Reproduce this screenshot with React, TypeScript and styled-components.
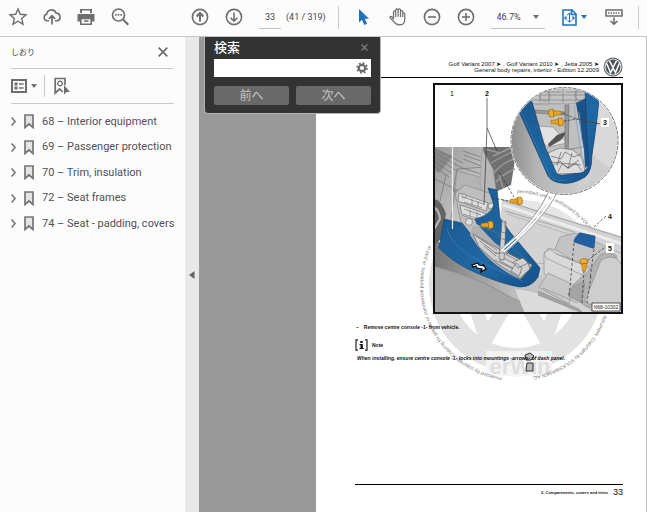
import React, { useState } from "react";
import styled, { createGlobalStyle } from "styled-components";

const GlobalStyle = createGlobalStyle`
  * { box-sizing: border-box; }
  body { margin: 0; background: #fcfcfc; overflow: hidden; }
  button, input, select { font: inherit; color: inherit; margin: 0; padding: 0; border: 0; background: none; }
  button { cursor: pointer; display: inline-flex; align-items: center; justify-content: center; }
  svg { display: block; flex: none; }
`;

const Shell = styled.div`
  display: flex;
  flex-direction: column;
  height: 100vh;
  font-family: "Open Sans", "Noto Sans CJK JP", sans-serif;
  font-size: 11px;
  color: #444;
`;

const Toolbar = styled.header`
  display: flex;
  align-items: center;
  flex: none;
  height: 37px;
  padding: 0 9px 2px 8px;
  background: #fcfcfc;
  border-bottom: 1px solid #c6c6c6;
`;

const Group = styled.div<{ $gap: number; $before?: number }>`
  display: flex;
  align-items: center;
  gap: ${(p) => p.$gap}px;
  margin-left: ${(p) => p.$before ?? 0}px;
`;

const IconButton = styled.button<{ $color?: string; $width?: number }>`
  height: 20px;
  min-width: ${(p) => p.$width ?? 20}px;
  gap: 4px;
  color: ${(p) => p.$color ?? "#6e6e6e"};
`;

const Divider = styled.span<{ $height: number; $before?: number }>`
  width: 1px;
  height: ${(p) => p.$height}px;
  margin-left: ${(p) => p.$before ?? 0}px;
  background: #c9c9c9;
`;

const PageInput = styled.input`
  width: 22px;
  height: 23px;
  font-family: Roboto, sans-serif;
  font-size: 9px;
  text-align: center;
  border-bottom: 1px solid #c4c4c4;
  outline: none;
`;

const PageCount = styled.span`
  width: 38px;
  font-family: Roboto, sans-serif;
  font-size: 9px;
  white-space: nowrap;
`;

const ZoomBox = styled.label`
  display: flex;
  align-items: center;
  width: 54px;
  height: 23px;
  padding-right: 6px;
  border-bottom: 1px solid #c4c4c4;
  color: #6e6e6e;
`;

const ZoomSelect = styled.select`
  appearance: none;
  flex: 1;
  min-width: 0;
  padding-left: 6px;
  font-family: Roboto, sans-serif;
  font-size: 9px;
  color: #444;
  outline: none;
`;

const Workspace = styled.div`
  display: flex;
  flex: 1;
  min-height: 0;
`;

const Sidebar = styled.aside`
  flex: none;
  width: 185px;
  padding: 0 11px;
  background: #fcfcfc;
`;

const PanelHeader = styled.div`
  display: flex;
  align-items: center;
  justify-content: space-between;
  height: 32px;
  padding: 0 1px 2px 0;
  border-bottom: 1px solid #c9c9c9;
`;

const PanelTitle = styled.h2`
  margin: 0;
  font-size: 8px;
  font-weight: 400;
`;

const PanelTools = styled.div`
  display: flex;
  align-items: center;
  height: 35px;
  border-bottom: 1px solid #c9c9c9;
`;

const BookmarkList = styled.ul`
  list-style: none;
  margin: 0;
  padding: 5px 0 0;
`;

const BookmarkRow = styled.li`
  display: flex;
  align-items: center;
  height: 25px;
  &:nth-child(even) { height: 26px; }
`;

const Expander = styled.button`
  width: 5px;
  height: 12px;
  color: #6e6e6e;
`;

const BookmarkLink = styled.a`
  display: flex;
  align-items: center;
  gap: 8px;
  margin-left: 8px;
  font-family: Roboto, sans-serif;
  font-size: 11px;
  line-height: 14px;
  white-space: nowrap;
  color: #505058;
  text-decoration: none;
`;

const Splitter = styled.button`
  && {
    flex: none;
    width: 14px;
    background: #e9e9e9;
    color: #666;
  }
`;

const Canvas = styled.main`
  position: relative;
  display: flex;
  flex: 1;
  min-width: 0;
  padding-left: 117px;
  background: #999;
`;

const Sheet = styled.article`
  position: relative;
  display: flex;
  flex-direction: column;
  flex: 1;
  min-width: 0;
  padding: 19px 23px 15px 39px;
  background: #fff;
  border-right: 1px solid #bbb;
  font-family: "Liberation Sans", Arial, sans-serif;
  color: #111;
`;

const SheetHeader = styled.div`
  display: flex;
  justify-content: flex-end;
  align-items: center;
  height: 22px;
  border-bottom: 1px solid #000;
`;

const HeaderMark = styled.div`
  display: flex;
  align-items: center;
  gap: 4px;
  height: 21px;
`;

const HeaderText = styled.p`
  margin: 0;
  font-size: 6px;
  line-height: 6px;
  text-align: right;
  white-space: nowrap;
  color: #111;
`;

const Figure = styled.figure`
  position: relative;
  align-self: flex-end;
  margin: 5px 0 0;
  border: 2px solid #111;
  background: #fff;
`;

const Watermark = styled.div`
  position: absolute;
  left: 96px;
  top: 144px;
  pointer-events: none;
`;

const Step = styled.p`
  position: relative;
  display: flex;
  gap: 5px;
  margin: 9px 0 0;
  padding-left: 1px;
  font-size: 5px;
  line-height: 8px;
  font-weight: 700;
`;

const NoteHead = styled.div`
  position: relative;
  display: flex;
  align-items: center;
  gap: 4px;
  margin-top: 8px;
  font-size: 5px;
  font-weight: 700;
`;

const NoteBody = styled.p`
  position: relative;
  margin: 3px 0 0 2px;
  font-size: 5px;
  line-height: 8px;
  font-style: italic;
  font-weight: 700;
  white-space: nowrap;
`;

const SheetFooter = styled.footer`
  display: flex;
  justify-content: flex-end;
  align-items: center;
  gap: 5px;
  margin-top: auto;
  padding-top: 2px;
  border-top: 1px solid #000;
  font-size: 4px;
  font-weight: 700;
`;

const PageNumber = styled.span`
  font-size: 9px;
  line-height: 10px;
  font-weight: 400;
`;

const FindPanel = styled.section`
  position: absolute;
  left: 5px;
  top: 0;
  width: 177px;
  padding: 0 9px 8px 9px;
  background: #333;
  border: solid #b4b4b4;
  border-width: 0 1px 1px;
  border-radius: 0 0 4px 4px;
  color: #fff;
`;

const FindHeader = styled.div`
  display: flex;
  align-items: center;
  justify-content: space-between;
  height: 22px;
  padding-bottom: 2px;
`;

const FindTitle = styled.h2`
  margin: 0;
  font-size: 13px;
  line-height: 16px;
  font-weight: 500;
`;

const FindField = styled.label`
  display: flex;
  align-items: center;
  height: 18px;
  padding-right: 3px;
  background: #fff;
  color: #6b6b6b;
`;

const FindInput = styled.input`
  flex: 1;
  min-width: 0;
  height: 18px;
  padding: 0 4px;
  outline: none;
`;

const FindActions = styled.div`
  display: grid;
  grid-template-columns: 1fr 1fr;
  gap: 7px;
  margin-top: 9px;
`;

const FindButton = styled.button`
  && {
    height: 19px;
    font-size: 12px;
    line-height: 16px;
    color: #c4c4c4;
    background: #696969;
    border-radius: 2px;
  }
`;

const Caret = () => (
  <svg width="6" height="4" viewBox="0 0 6 4"><path d="M0 0h6L3 4z" fill="currentColor" /></svg>
);

const Close = ({ size, width }: { size: number; width: number }) => (
  <svg width={size} height={size} viewBox="0 0 10 10" stroke="currentColor" strokeWidth={width}>
    <path d="M.7.7l8.6 8.6M9.3.7L.7 9.3" />
  </svg>
);

type Glyph = "star" | "cloud" | "print" | "search" | "up" | "down" | "hand" | "minus" | "plus";

const Icon = ({ name }: { name: Glyph }) => (
  <svg width="20" height="20" viewBox="0 0 20 20" fill="none" stroke="currentColor" strokeWidth="1.6">
    {name === "star" && <path d="M10 2l2.3 5.3 5.7.5-4.3 3.8 1.3 5.6-5-3-5 3 1.3-5.6L2 7.8l5.7-.5z" strokeWidth="1.4" />}
    {name === "cloud" && (
      <>
        <path d="M7 13.8H5.200a3.300 3.300 0 0 1-.5-6.500 4.800 4.800 0 0 1 9.300-1.200 3.900 3.900 0 0 1 1 7.700H13" />
        <path d="M10 17.500V9M6.900 11.800L10 8.700l3.100 3.100" strokeWidth="1.700" />
      </>
    )}
    {name === "print" && (
      <>
        <path d="M4 2h12v4H4z" fill="currentColor" stroke="none" />
        <path d="M6 3.500h8V7H6z" fill="#fcfcfc" stroke="none" />
        <path d="M1.500 7h17v7.500h-17z" fill="currentColor" stroke="none" />
        <path d="M4.800 11.500h10.400v5.700H4.800z" fill="#fcfcfc" />
        <path d="M8 14h4.500" />
      </>
    )}
    {name === "search" && (
      <>
        <circle cx="8.500" cy="8" r="6" strokeWidth="1.700" />
        <path d="M13 12.500l5.300 5.300" strokeWidth="2" />
        <path d="M5 7.800h7" strokeWidth="1.800" strokeDasharray="1.600 1.100" />
      </>
    )}
    {(name === "up" || name === "down" || name === "minus" || name === "plus") && <circle cx="10" cy="10" r="7.600" />}
    {name === "up" && <path d="M10 14.500V6.500M6.600 9.500L10 6l3.400 3.500" strokeWidth="2" />}
    {name === "down" && <path d="M10 5.500v8.500M6.600 10.800L10 14.200l3.400-3.400" />}
    {(name === "minus" || name === "plus") && <path d="M6 10h8" />}
    {name === "plus" && <path d="M10 6v8" />}
    {name === "hand" && (
      <path
        d="M5.500 12.500V5.200c0-1.800 2.200-1.800 2.200 0V10V3.200c0-1.900 2.400-1.900 2.400 0V9.700V3.200c0-1.900 2.400-1.700 2.400 0V10V4.800c0-1.700 2.300-1.700 2.300 0V10V7.200c0-1.600 2-1.500 2 0v5.200c0 3.500-2 5.500-5.500 5.500-3 0-4.200-1.200-5.500-3.200L2.200 11c-.8-1.300 1-2.200 2-.9l1.300 1.800"
        strokeWidth="1.200"
      />
    )}
  </svg>
);

const CursorIcon = () => (
  <svg width="11" height="18" viewBox="0 0 11 18"><path d="M1 1v13.500l3-2.800 2.200 5.300 2.800-1.200-2.200-5H11z" fill="currentColor" /></svg>
);

const FitIcon = () => (
  <svg width="15" height="17" viewBox="0 0 15 17" fill="none" stroke="currentColor" strokeWidth="1.600">
    <path d="M1 1h9l4 4v11H1zM9.500 1v4.500H14" />
    <path d="M7.500 4v9M5 6l2.500-2L9 5.500M5.500 11.500l2 1.500 2-1.500" strokeWidth="1" />
    <path d="M2 9l2.500-2.500v5zM13 9l-2.500-2.500v5z" fill="currentColor" stroke="none" />
  </svg>
);

const ScrollIcon = () => (
  <svg width="18" height="18" viewBox="0 0 18 18" fill="none" stroke="currentColor" strokeWidth="1.600">
    <path d="M1 2h16v6H1z" />
    <path d="M3 5h12" strokeWidth="1.700" strokeDasharray="1.500 1" />
    <path d="M9 9.500v6.500M5.500 13L9 16.200l3.500-3.200" />
  </svg>
);

const OptionsIcon = () => (
  <svg width="16" height="14" viewBox="0 0 16 14" fill="none" stroke="currentColor">
    <rect x="1" y="1" width="14" height="12" strokeWidth="2" />
    <path d="M3.500 5h3M3.500 9h3" strokeWidth="3" />
    <path d="M8 5h4.500M8 9h4.500" strokeWidth="1.500" />
  </svg>
);

const FindBookmarkIcon = () => (
  <svg width="16" height="18" viewBox="0 0 16 18" fill="none" stroke="currentColor" strokeWidth="1.700">
    <path d="M11 8V1.500H1.200V16l4.500-4 3 3" />
    <circle cx="6" cy="6.500" r="2.300" strokeWidth="1.300" />
    <path d="M10 8l6 7h-3.500L10 17.500z" fill="currentColor" stroke="none" />
  </svg>
);

const BookmarkIcon = () => (
  <svg width="10" height="15" viewBox="0 0 10 15"><path d="M1 1h8v12.500L5 10l-4 3.500z" fill="#e4e4e4" stroke="#757575" strokeWidth="1.700" /></svg>
);

const GearIcon = () => (
  <svg width="12" height="12" viewBox="0 0 12 12" fill="none" stroke="currentColor">
    <circle cx="6" cy="6" r="3.200" strokeWidth="2.200" />
    <circle cx="6" cy="6" r="4.900" strokeWidth="1.700" strokeDasharray="1.900 1.950" />
  </svg>
);

const VwLogo = () => (
  <svg width="20" height="20" viewBox="0 0 20 20">
    <circle cx="10" cy="10" r="9.500" fill="#555d64" />
    <circle cx="10" cy="10" r="8" fill="none" stroke="#e2e4e6" strokeWidth="1.200" />
    <circle cx="10" cy="10" r="7" fill="#4c545b" />
    <path d="M6.500 3.800l3 5.700h1l3-5.700M3.600 6.200l4 9.500L10 11l2.400 4.700 4-9.500" fill="none" stroke="#fff" strokeWidth="1.500" />
  </svg>
);

const WatermarkArt = () => (
  <svg width="208" height="204" viewBox="-104 -104 208 204">
    <defs>
      <path id="sealLeft" d="M-14 92A93 93 0 0 1-84-40" />
      <path id="sealRight" d="M88 30A93 93 0 0 1 14 92" />
    </defs>
    <g fill="none" stroke="#e2e2e2">
      <circle r="75" strokeWidth="24" />
      <path d="M-58-34L-30 54 0 2 30 54 58-34" strokeWidth="14" />
    </g>
    <path d="M-30 66h66v23q-33 5-66 0z" fill="#f4f4f4" />
    <text x="4" y="89" textAnchor="middle" fontFamily="Liberation Sans" fontWeight="700" fontSize="22" fill="#dedede">erWin</text>
    <g fontFamily="Liberation Sans" fontSize="5" fill="#777">
      <text><textPath href="#sealLeft">Protected by copyright. Copying for private or commercial purposes, in part or in</textPath></text>
      <text><textPath href="#sealRight">document. Copyright by VOLKSWAGEN AG.</textPath></text>
    </g>
    <g fill="#bbb" stroke="#333" strokeWidth="1">
      <path d="M9 70l5-2 4 3-3 4h-5zM11 78h6v8h-7z" />
    </g>
  </svg>
);

const Bolt = ({ x, y, turn = 0 }: { x: number; y: number; turn?: number }) => (
  <g transform={`translate(${x} ${y}) rotate(${turn})`}>
    <path d="M-6-1.500L2-2.500v5L-6 1.500z" fill="#e9a11e" stroke="#9a6408" strokeWidth=".5" />
    <path d="M1-3.500l4-.5 1.500 3L6 3 2 4z" fill="#f0ad2c" stroke="#8b5a08" strokeWidth=".6" />
  </g>
);

const ConsoleDrawing = () => (
  <svg width="186" height="227" viewBox="2 2 186 227" role="img" aria-label="Centre console">
    <defs>
      <linearGradient id="floor" x1="0" y1="0" x2="1" y2="1">
        <stop offset="0" stopColor="#999" /><stop offset=".45" stopColor="#b4b4b4" /><stop offset="1" stopColor="#dedede" />
      </linearGradient>
      <linearGradient id="lower" x1="0" y1="0" x2="1" y2="0">
        <stop offset="0" stopColor="#777" /><stop offset=".5" stopColor="#bcbcbc" /><stop offset="1" stopColor="#d6d6d6" />
      </linearGradient>
      <linearGradient id="blue" x1="0" y1="0" x2="1" y2="1">
        <stop offset="0" stopColor="#1a558d" /><stop offset=".6" stopColor="#1f68a4" /><stop offset="1" stopColor="#155089" />
      </linearGradient>
      <linearGradient id="lens" x1="0" y1="0" x2="1" y2="0">
        <stop offset="0" stopColor="#8c8c8c" /><stop offset=".25" stopColor="#b5b5b5" /><stop offset="1" stopColor="#e2e2e2" />
      </linearGradient>
      <clipPath id="lensClip"><circle cx="131.500" cy="58" r="53.500" /></clipPath>
      <path id="sealTop" d="M84 110A92 92 0 0 1 156 146" />
    </defs>

    <path d="M70 118A88 88 0 0 1 158 155L120 150z" fill="#e6e6e6" />
    <text fontFamily="Liberation Sans" fontSize="5" fill="#777"><textPath href="#sealTop">permitted unless authorised by VOLK</textPath></text>
    <path d="M69 116l121 38v77H60z" fill="#d3d3d3" />
    <g fill="none" stroke="#909090" strokeWidth=".7">
      <path d="M69 117l121 38M72 128l44 13 25 8M190 160l-30-8" />
      <path d="M70 122l120 39" stroke="#ececec" strokeWidth="3" />
      <path d="M74 131l67 22M100 180l90 5" stroke="#aaa" />
    </g>

    <path d="M0 150q16 26 38 34l50 20 20-12 30 25 20 14H0z" fill="url(#lower)" />
    <path d="M0 183q48 12 75 30 25 12 42 18H0z" fill="#a4a4a4" />
    <path d="M0 183q48 12 75 30 25 12 42 18" fill="none" stroke="#8a8a8a" strokeWidth=".8" />
    <path d="M82 206q32 3 60 25h-50z" fill="#dbdbdb" />

    <path d="M0 64h54l-8 50-15 25-18 2L0 150z" fill="url(#floor)" />
    <path d="M0 65l20 8L6 90l-6-4z" fill="#888" />
    <g stroke="#777" strokeWidth=".8" fill="none">
      <path d="M2 66l28 14M2 70l25 14M2 74l22 14M2 79l18 12M2 84l14 10M30 68l18 6M31 72l17 6M30 76l18 7" />
      <path d="M2 96l20 10-4 30M24 86l-4 22 28 12 4-36zM24 95l26 8M20 106l28 12M27 84l24 8M13 92l-6 26" />
    </g>
    <path d="M24 88l26 7-3 20-25-9z" fill="#b4b4b4" stroke="#888" strokeWidth=".6" />
    <path d="M50 64h34l-6 38-18 8-8-30z" fill="#707070" />
    <path d="M52 66l15 4 12-6M58 80l24-13M60 91q10-13 25-16M63 99q8-9 19-13M60 73l18-8M66 92l4 13" stroke="#999" strokeWidth="1.400" fill="none" />
    <path d="M49 66l11 20 4 28-13 6-4-20z" fill="#b8b8b8" stroke="#999" strokeWidth=".6" />
    <path d="M0 116q8 0 13 15l-5 25-8 7z" fill="#646464" />
    <path d="M0 124q6 2 7 12l-7 12" fill="none" stroke="#bbb" strokeWidth="2" />
    <path d="M22 110l10-8 30 10-2 31-24 9-8-12z" fill="#bebebe" stroke="#888" strokeWidth=".7" />
    <g fill="#ddd" stroke="#666" strokeWidth=".6">
      <path d="M26 110l29 10-2 8-28-10zM27 122l27 9-3 9-22-8z" />
      <circle cx="58" cy="123" r="3" /><circle cx="36" cy="139" r="3.500" /><circle cx="31" cy="113" r="2" />
      <path d="M30 114l20 7M31 119l18 6M31 126l17 6M30 131l16 5M39 116v6M45 118v6M37 127v6M44 129v6" fill="none" />
    </g>

    <path d="M55 105l9 2 3 28 10 14 30 36-2 9q-6 10-18 10-20-3-50-17Q20 179 6 165l5-29 18 4 11 14q25 33 48 42l11-13-37-34-18-8-2-5q16-4 19-14z" fill="url(#blue)" stroke="#174774" strokeWidth=".7" />
    <path d="M40 142l22 7 37 33-12 14Q56 183 37 152z" fill="#b0b0b0" />
    <path d="M46 143l16 6 36 32-8-1-28-20z" fill="#20639c" />
    <g fill="#d0d0d0" stroke="#5a5a5a" strokeWidth=".6">
      <path d="M40 151l12 7 14 8 29 14 2 6-10 9-22-14-19-17z" />
      <path d="M43 153l21 14M47 158l17 13M51 163l12 10M70 170l20 10-5 8-18-10zM75 170l16 8M62 177l26 13M67 173l19 10" />
      <path d="M66 176l3-38 4 1-2 38zM66 148l9 3M65 155l10 2M62 170h16M72 145v-7" />
      <path d="M80 179l10-4 5 5-10 5zM78 188l5-8 6 5-3 8z" />
    </g>
    <path d="M14 145q4 20 42 38 20 9 34 15" fill="none" stroke="#3a82bd" strokeWidth="1" opacity=".7" />
    <path d="M39 182l6-2 1 2 5 1-1-2 3 5-5 3 1-3-5-1-1-2-3 1z" fill="#fff" stroke="#000" strokeWidth="1.200" />

    <g fill="#c3c3c3" stroke="#909090" strokeWidth=".7">
      <path d="M111 170l5-5 26 8 20-13 28 11v50l-30 7-38-29-11-8z" fill="#d7d7d7" />
      <path d="M127 154l15-4 28 12 14 11-12 18-25-9-25-16z" />
      <path d="M111 171q5-8 11-1l33 13-6 9-36-17z" fill="#d9d9d9" />
      <path d="M115 190l26 12-5 19-30-17z" fill="#c8c8c8" />
      <path d="M141 201l16-15 10-14q12-8 20 9l3 45-36-2-19-13z" fill="#b2b2b2" />
      <path d="M152 218l16-41q16-9 22 8v38l-34-2z" fill="#cecece" />
      <path d="M135 210q8-11 17-10l-4 19-12-5zM105 208l41 18 4 4-45-18M110 205l35 15M123 171l28 11" fill="#a4a4a4" />
    </g>
    <path d="M143 156l4-5 14 3-1 10-18-6z" fill="#235f9f" stroke="#235f9f" strokeWidth="3" strokeLinejoin="round" />
    <g fill="none" stroke="#333" strokeWidth=".7">
      <path d="M141 160l-5 54M161 166l-4 30M151 187l-2 34M158 193l-4 27" strokeDasharray="3 2" />
      <path d="M173 133l-12 11M171 165l-17 13" strokeDasharray="3 1.500" />
      <path d="M66 89l15 25M59 115l18 3" strokeDasharray="3 1.500" />
      <path d="M54 15v30l-3 77M54 45l10 23" />
    </g>
    <path d="M19.500 64v82" stroke="#eee" strokeWidth="1.200" />
    <path d="M117 108q-12 29-49 59M124 108q-13 27-53 61" fill="none" stroke="#fff" strokeWidth="2.400" />
    <path d="M116 108q-12 29-49 59M125 108q-13 27-53 61" fill="none" stroke="#555" strokeWidth=".6" />
    <Bolt x={83} y={118} /><Bolt x={54} y={142} /><Bolt x={151} y={182} turn={-90} />

    <g clipPath="url(#lensClip)">
      <circle cx="131.500" cy="58" r="54" fill="url(#lens)" />
      <path d="M95 5h70l-8 18-57-3z" fill="#c3c3c3" />
      <g fill="none" stroke="#888" strokeWidth=".8">
        <path d="M99 12h60M96 17h63M107 6v13M116 5v15M130 5v15M143 6v14M110 9h18M133 9h18M102 21h51" />
        <circle cx="112" cy="13" r="5" /><circle cx="148" cy="12" r="6" />
      </g>
      <path d="M100 22l43-1 9 68-30 1-12-38z" fill="#bfbfbf" />
      <path d="M102 43l18 1 14 16-19 4-7-6z" fill="#e2e2e2" stroke="#888" strokeWidth=".6" />
      <path d="M115 61l9-9 11-4-7 9-12 7z" fill="#555" />
      <path d="M102 27l30 2v3l-29-2zM112 70l38-6" fill="#999" stroke="#777" strokeWidth=".7" />
      <path d="M132 22h4l-1 58h-3z" fill="#999" stroke="#666" strokeWidth=".6" />
      <path d="M115 70l12-5 13 2 10 9 2 14-30 1z" fill="#ddd" stroke="#777" strokeWidth=".7" />
      <path d="M118 73l10 3 4-7 9 5 7-3M119 83l8-5 7 7 12-8M125 89l4-8 7 4 7-5 6 8M128 69l-4 14M139 70l-4 16M117 79l31 3" fill="none" stroke="#666" strokeWidth=".7" />
      <path d="M143 20l16-8-1 68-6 5-1-18z" fill="#1b5386" />
      <path d="M141 23l9 58M146 29l3 30" stroke="#80a6c6" strokeWidth=".8" />
      <path d="M89 15l10 4 13 45 11 25q2 4 8 3l17-2q6-2 7-8l-1-26-2-50 14-4q0 35-7 70 0 17-7 22-13 8-24 6-9-1-13-7L85 26z" fill="url(#blue)" stroke="#123f6a" strokeWidth=".7" />
      <path d="M88 28l29 65q6 6 17 4" fill="none" stroke="#3c83ba" strokeWidth="1" opacity=".5" />
      <path d="M168 10l20 28-2 60-28 3 2-32z" fill="#d9d9d9" />
      <path d="M160 71q12 15 23 15l-16 26-28 3 19-18z" fill="#c9c9c9" opacity=".8" />
      <Bolt x={122} y={30} turn={180} /><Bolt x={124} y={39} />
      <path d="M129 30l12 5 26 6M131 38l13-2 23 5" fill="none" stroke="#444" strokeWidth=".7" strokeDasharray="3 1" />
    </g>
    <circle cx="131.500" cy="58" r="53.500" fill="none" stroke="#fff" strokeWidth="1.500" />
    <circle cx="131.500" cy="58" r="53.500" fill="none" stroke="#555" strokeWidth=".8" strokeDasharray="4 1" />
    <path d="M168 35h8v9h-8zM173 128h8v10h-8zM173 160h8v10h-8z" fill="#fff" />
    <g fontFamily="Liberation Sans" fontSize="7" fontWeight="700" fill="#111" textAnchor="middle">
      <text x="19" y="13" fontWeight="400">1</text><text x="54" y="13">2</text><text x="172" y="42">3</text><text x="177" y="136">4</text><text x="177" y="168">5</text>
    </g>
    <rect x="159" y="220" width="28" height="8" fill="#fff" stroke="#333" strokeWidth=".8" />
    <text x="173" y="226" textAnchor="middle" fontFamily="Liberation Sans" fontSize="5" fill="#222">N68-10302</text>
  </svg>
);

const InfoIcon = () => (
  <svg width="13" height="12" viewBox="0 0 13 12">
    <path d="M3 .8H1v10.400h2M10 .8h2v10.400h-2" fill="none" stroke="#222" strokeWidth="1.200" />
    <path d="M5.300 2h2.400v2H5.300zM4.500 5h3.300v4h1v1H4.500V9h1V6h-1z" fill="#111" />
  </svg>
);

const bookmarks = [
  "68 – Interior equipment",
  "69 – Passenger protection",
  "70 – Trim, insulation",
  "72 – Seat frames",
  "74 – Seat - padding, covers",
];

export default function App() {
  const [page, setPage] = useState("33");
  const [query, setQuery] = useState("");
  return (
    <Shell>
      <GlobalStyle />
      <Toolbar>
        <Group $gap={14}>
          <IconButton aria-label="Star"><Icon name="star" /></IconButton>
          <IconButton aria-label="Upload"><Icon name="cloud" /></IconButton>
          <IconButton aria-label="Print"><Icon name="print" /></IconButton>
          <IconButton aria-label="Search"><Icon name="search" /></IconButton>
        </Group>
        <Group $gap={14} $before={60}>
          <IconButton aria-label="Previous page"><Icon name="up" /></IconButton>
          <IconButton aria-label="Next page"><Icon name="down" /></IconButton>
        </Group>
        <Group $gap={5} $before={15}>
          <PageInput aria-label="Page" value={page} onChange={(e) => setPage(e.target.value)} />
          <PageCount>(41 / 319)</PageCount>
        </Group>
        <Divider $height={23} $before={14} />
        <Group $gap={14} $before={15}>
          <IconButton $color="#2272b9" aria-label="Select"><CursorIcon /></IconButton>
          <IconButton aria-label="Pan"><Icon name="hand" /></IconButton>
          <IconButton aria-label="Zoom out"><Icon name="minus" /></IconButton>
          <IconButton aria-label="Zoom in"><Icon name="plus" /></IconButton>
        </Group>
        <Group $gap={17} $before={15}>
          <ZoomBox>
            <ZoomSelect aria-label="Zoom" defaultValue="46.7%"><option>46.7%</option></ZoomSelect>
            <Caret />
          </ZoomBox>
          <IconButton $color="#2272b9" aria-label="Fit page"><FitIcon /><Caret /></IconButton>
          <IconButton aria-label="Scrolling"><ScrollIcon /></IconButton>
        </Group>
        <Divider $height={23} $before={14} />
      </Toolbar>
      <Workspace>
        <Sidebar>
          <PanelHeader>
            <PanelTitle>しおり</PanelTitle>
            <IconButton aria-label="Close bookmarks"><Close size={10} width={1.7} /></IconButton>
          </PanelHeader>
          <PanelTools>
            <IconButton aria-label="Options"><OptionsIcon /><Caret /></IconButton>
            <Divider $height={22} $before={7} />
            <Group $gap={0} $before={7}>
              <IconButton aria-label="Find bookmark"><FindBookmarkIcon /></IconButton>
            </Group>
          </PanelTools>
          <BookmarkList>
            {bookmarks.map((label) => (
              <BookmarkRow key={label}>
                <Expander aria-label={`Expand ${label}`}>
                  <svg width="5" height="9" viewBox="0 0 5 9" fill="none" stroke="currentColor" strokeWidth="1.500"><path d="M.6.6l3.500 3.900L.6 8.400" /></svg>
                </Expander>
                <BookmarkLink href="#"><BookmarkIcon />{label}</BookmarkLink>
              </BookmarkRow>
            ))}
          </BookmarkList>
        </Sidebar>
        <Splitter aria-label="Collapse panel">
          <svg width="6" height="8" viewBox="0 0 6 8"><path d="M5.500 0v8L0 4z" fill="currentColor" /></svg>
        </Splitter>
        <Canvas>
          <Sheet>
            <Watermark><WatermarkArt /></Watermark>
            <SheetHeader>
              <HeaderMark>
                <HeaderText>
                  Golf Variant 2007 ➤ , Golf Variant 2010 ➤ , Jetta 2005 ➤<br />
                  General body repairs, interior - Edition 12.2009
                </HeaderText>
                <VwLogo />
              </HeaderMark>
            </SheetHeader>
            <Figure><ConsoleDrawing /></Figure>
            <Step><span>–</span><span>Remove centre console -1- from vehicle.</span></Step>
            <NoteHead><InfoIcon />Note</NoteHead>
            <NoteBody>When installing, ensure centre console -1- locks into mountings -arrows- of dash panel.</NoteBody>
            <SheetFooter><span>2. Compartments, covers and trims</span><PageNumber>33</PageNumber></SheetFooter>
          </Sheet>
          <FindPanel>
            <FindHeader>
              <FindTitle>検索</FindTitle>
              <IconButton $color="#808080" $width={13} aria-label="Close search"><Close size={7} width={1.6} /></IconButton>
            </FindHeader>
            <FindField>
              <FindInput aria-label="検索" value={query} onChange={(e) => setQuery(e.target.value)} />
              <GearIcon />
            </FindField>
            <FindActions>
              <FindButton>前へ</FindButton>
              <FindButton>次へ</FindButton>
            </FindActions>
          </FindPanel>
        </Canvas>
      </Workspace>
    </Shell>
  );
}
